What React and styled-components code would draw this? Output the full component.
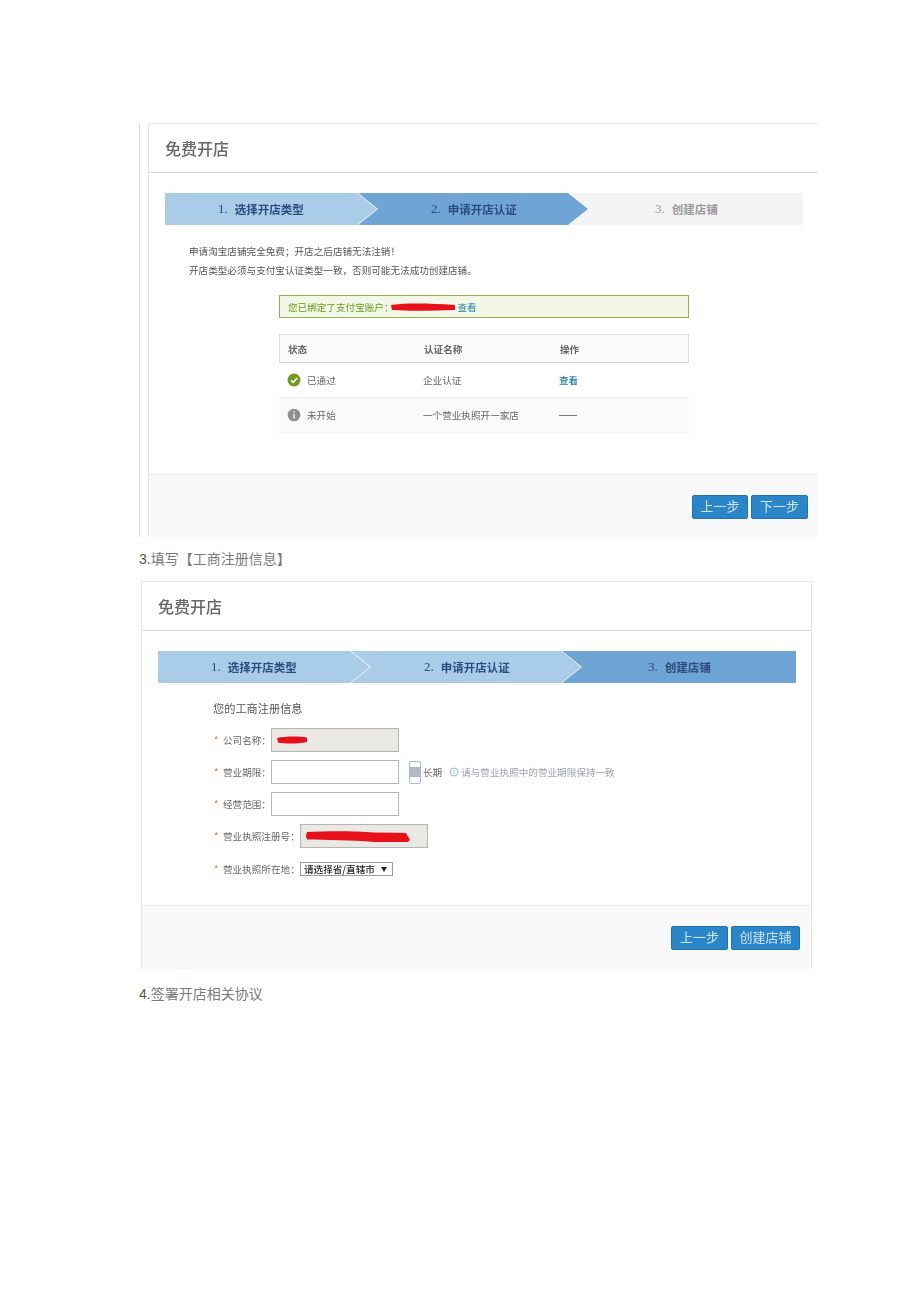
import React from "react";
import styled, { createGlobalStyle } from "styled-components";

const Global = createGlobalStyle`
  html, body { margin: 0; padding: 0; background: #fff; }
  body { font-family: "Noto Sans CJK SC", "Liberation Sans", sans-serif; }
`;

const Page = styled.div`
  box-sizing: border-box;
  width: 920px;
  height: 1302px;
  padding: 123px 0 0 139px;
  overflow: hidden;
`;

const Shot = styled.div`
  box-sizing: border-box;
  display: flex;
  width: ${(p) => p.$width}px;
  height: ${(p) => p.$height}px;
  margin: ${(p) => p.$top || 0}px 0 0 ${(p) => p.$left || 0}px;
  padding-left: ${(p) => (p.$rail ? 8 : 0)}px;
  border-left: ${(p) => (p.$rail ? "1px solid #dcdcdc" : "0")};
  filter: blur(0.45px);
`;

const Panel = styled.section`
  flex: 1;
  min-width: 0;
  display: flex;
  flex-direction: column;
  border: 1px solid #e6e6e6;
  border-bottom: 0;
  border-right: ${(p) => (p.$closed ? "1px solid #e6e6e6" : "0")};
`;

const TitleBar = styled.header`
  box-sizing: border-box;
  height: 49px;
  flex: none;
  display: flex;
  align-items: center;
  padding: 0 0 1px 16px;
  border-bottom: 1px solid #dcdcdc;
  font-size: 16px;
  font-weight: 500;
  color: #666;
`;

const Body = styled.div`
  flex: 1;
  min-height: 0;
  padding: 20px 15px 0 16px;
`;

const StepBar = styled.div`
  display: flex;
  height: 32px;
  width: 638px;
  background: #f3f3f3;
`;

const arrow = "polygon(0 0, calc(100% - 20px) 0, 100% 50%, calc(100% - 20px) 100%, 0 100%)";

const Step = styled.div`
  position: relative;
  box-sizing: border-box;
  flex: none;
  width: ${(p) => p.$width}px;
  margin-left: ${(p) => (p.$first ? 0 : -20)}px;
  z-index: ${(p) => p.$z};
  display: flex;
  align-items: center;
  padding-left: ${(p) => p.$pad}px;
  font-size: 11.5px;
  font-weight: 700;
  color: ${(p) => (p.$muted ? "#9a9a9a" : "#2b4c7e")};
  background: ${(p) => (p.$tail ? "transparent" : "#fff")};
  clip-path: ${(p) => (p.$tail ? "none" : arrow)};
  &::before {
    content: "";
    position: absolute;
    inset: 0 ${(p) => (p.$tail ? 0 : "1px")} 0 0;
    z-index: -1;
    background: ${(p) => p.$color};
    clip-path: ${(p) => (p.$tail ? "none" : arrow)};
  }
`;

const Num = styled.span`
  font-family: "Liberation Serif", serif;
  font-size: 13px;
  font-weight: 400;
  white-space: pre;
  margin-right: 7px;
`;

const Intro = styled.div`
  margin: 17px 0 0 24px;
  font-size: 9.6px;
  line-height: 19px;
  color: #555;
`;

const Center = styled.div`
  width: 410px;
  margin: 15px 0 0 114px;
`;

const Alert = styled.div`
  box-sizing: border-box;
  height: 23px;
  display: flex;
  align-items: center;
  gap: 3px;
  padding-left: 8px;
  background: #f2f7e6;
  border: 1px solid #8fae55;
  font-size: 9.6px;
  color: #6c9a22;
`;

const Link = styled.span`
  color: #1d7f9f;
  font-weight: ${(p) => (p.$bold ? 500 : 400)};
`;

const Redact = styled.svg`
  display: block;
  flex: none;
  margin-left: ${(p) => p.$pull || 0}px;
`;

const Table = styled.div`
  margin-top: 16px;
  font-size: 9.6px;
  color: #666;
`;

const Row = styled.div`
  box-sizing: border-box;
  display: grid;
  grid-template-columns: 136px 136px 1fr;
  align-items: center;
  padding-left: 8px;
  height: ${(p) => p.$height}px;
  background: ${(p) => p.$bg || "#fff"};
  border: ${(p) => (p.$head ? "1px solid #dcdcdc" : "0")};
  border-bottom: 1px solid ${(p) => (p.$head ? "#d4d4d4" : "#f0f0f0")};
  font-weight: ${(p) => (p.$head ? 700 : 400)};
`;

const Status = styled.div`
  display: flex;
  align-items: center;
  gap: 6px;
`;

const Dash = styled.span`
  display: block;
  width: 18px;
  height: 1px;
  background: #777;
`;

const Footer = styled.footer`
  box-sizing: border-box;
  flex: none;
  height: ${(p) => p.$height}px;
  display: flex;
  justify-content: flex-end;
  gap: 3px;
  padding: 20px ${(p) => p.$right}px 0 0;
  background: #f9f9f9;
  border-top: 1px solid #e9e9e9;
`;

const Button = styled.div`
  box-sizing: border-box;
  width: ${(p) => p.$width}px;
  height: 24px;
  display: flex;
  align-items: center;
  justify-content: center;
  padding-bottom: 3px;
  background: #2a86c8;
  border: 1px solid #1f73ae;
  border-radius: 2px;
  color: #cfe4f3;
  font-size: 13px;
`;

const Caption = styled.p`
  margin: ${(p) => p.$top}px 0 0;
  font-size: 14px;
  line-height: 22px;
  color: #7a7a7a;
`;

const CaptionNum = styled.span`
  font-family: "Liberation Sans", sans-serif;
  color: #555;
`;

const Form = styled.div`
  margin: 15px 0 0 55px;
  font-size: 9.6px;
  color: #666;
`;

const FormTitle = styled.div`
  font-size: 11.2px;
  line-height: 20px;
  color: #555;
  margin-bottom: 10px;
`;

const FormRow = styled.div`
  display: flex;
  align-items: center;
  height: 24px;
  margin-top: ${(p) => p.$top ?? 8}px;
`;

const Label = styled.div`
  flex: none;
  width: ${(p) => p.$width}px;
  white-space: nowrap;
`;

const Star = styled.span`
  display: inline-block;
  width: 10px;
  padding-left: 1px;
  box-sizing: border-box;
  color: #e66;
`;

const Input = styled.div`
  box-sizing: border-box;
  flex: none;
  width: ${(p) => p.$width || 128}px;
  height: 24px;
  display: flex;
  align-items: center;
  padding-left: 5px;
  border: 1px solid #b5b5b5;
  background: ${(p) => (p.$disabled ? "#ebe9e3" : "#fff")};
`;

const Check = styled.div`
  box-sizing: border-box;
  flex: none;
  width: 12px;
  height: 23px;
  margin: 0 2px 0 10px;
  display: flex;
  align-items: center;
  justify-content: center;
  border: 1px solid #9db8e2;
  border-radius: 2px;
  &::after {
    content: "";
    width: 10px;
    height: 10px;
    background: #b4b8bd;
  }
`;

const Hint = styled.span`
  display: flex;
  align-items: center;
  gap: 2px;
  margin-left: 7px;
  font-size: 9.6px;
  color: #9aa3ad;
`;

const Select = styled.div`
  box-sizing: border-box;
  flex: none;
  width: 93px;
  height: 14px;
  display: flex;
  align-items: center;
  justify-content: space-between;
  padding: 0 5px 0 3px;
  border: 1px solid #9a9a9a;
  background: #fff;
  color: #222;
  font-size: 9.6px;
  font-weight: 500;
`;

const Arrow = styled.span`
  width: 0;
  height: 0;
  border-left: 3px solid transparent;
  border-right: 3px solid transparent;
  border-top: 5px solid #222;
`;

const Steps = ({ items }) => (
  <StepBar>
    {items.map((s, i) => (
      <Step
        key={s.n}
        $first={i === 0}
        $z={3 - i}
        $tail={i === 2}
        $width={[213, 231, 234][i]}
        $pad={[53, 73, 86][i]}
        $color={s.color}
        $muted={s.muted}
      >
        <Num>{s.n}.</Num>
        {s.t}
      </Step>
    ))}
  </StepBar>
);

const LIGHT = "#a9cce9";
const DARK = "#6fa5d5";
const COLON = "\uFF1A";

const CheckIcon = () => (
  <svg width="14" height="14" viewBox="0 0 14 14">
    <circle cx="7" cy="7" r="6.5" fill="#6f9a1e" />
    <path d="M4 7.2l2.2 2.2L10.2 5" fill="none" stroke="#fff" strokeWidth="1.6" />
  </svg>
);

const InfoIcon = () => (
  <svg width="14" height="14" viewBox="0 0 14 14">
    <circle cx="7" cy="7" r="6.3" fill="#8e8e8e" />
    <path d="M7 6v4.4M7 3.4v1.4" stroke="#e8e8e8" strokeWidth="1.6" />
  </svg>
);

const HintIcon = () => (
  <svg width="10" height="10" viewBox="0 0 10 10">
    <circle cx="5" cy="5" r="4" fill="none" stroke="#8fb2d8" strokeWidth="0.9" />
    <path d="M5 4.4v3M5 2.6v1" stroke="#8fb2d8" strokeWidth="0.9" />
  </svg>
);

export default function App() {
  return (
    <Page>
      <Global />
      <Shot $width={679} $height={414} $rail>
        <Panel>
          <TitleBar>免费开店</TitleBar>
          <Body>
            <Steps
              items={[
                { n: 1, t: "选择开店类型", color: LIGHT },
                { n: 2, t: "申请开店认证", color: DARK },
                { n: 3, t: "创建店铺", color: "#f3f3f3", muted: true },
              ]}
            />
            <Intro>
              {"申请淘宝店铺完全免费\uFF1B开店之后店铺无法注销\uFF01"}
              <br />
              {"开店类型必须与支付宝认证类型一致\uFF0C否则可能无法成功创建店铺。"}
            </Intro>
            <Center>
              <Alert>
                {"您已绑定了支付宝账户" + COLON}
                <Redact $pull={-6} width="64" height="8" viewBox="0 0 64 8">
                  <path d="M0 2C12 0 36 0 64 2V7C40 8 14 8 1 7Z" fill="#e8101a" />
                </Redact>
                <Link>查看</Link>
              </Alert>
              <Table>
                <Row $head $height={29} $bg="#fafafa">
                  <span>状态</span>
                  <span>认证名称</span>
                  <span>操作</span>
                </Row>
                <Row $height={35}>
                  <Status>
                    <CheckIcon />
                    已通过
                  </Status>
                  <span>企业认证</span>
                  <Link $bold>查看</Link>
                </Row>
                <Row $height={35} $bg="#fafafa">
                  <Status>
                    <InfoIcon />
                    未开始
                  </Status>
                  <span>一个营业执照开一家店</span>
                  <Dash />
                </Row>
              </Table>
            </Center>
          </Body>
          <Footer $height={63} $right={10}>
            <Button $width={56}>上一步</Button>
            <Button $width={57}>下一步</Button>
          </Footer>
        </Panel>
      </Shot>
      <Caption $top={10}>
        <CaptionNum>3.</CaptionNum>填写【工商注册信息】
      </Caption>
      <Shot $width={671} $height={388} $left={2} $top={11}>
        <Panel $closed>
          <TitleBar>免费开店</TitleBar>
          <Body>
            <Steps
              items={[
                { n: 1, t: "选择开店类型", color: LIGHT },
                { n: 2, t: "申请开店认证", color: LIGHT },
                { n: 3, t: "创建店铺", color: DARK },
              ]}
            />
            <Form>
              <FormTitle>您的工商注册信息</FormTitle>
              <FormRow $top={0}>
                <Label $width={58}>
                  <Star>*</Star>
                  {"公司名称" + COLON}
                </Label>
                <Input $disabled>
                  <Redact width="30" height="8" viewBox="0 0 30 8">
                    <path d="M0 2C8 0 22 0 30 1.5V6C20 8 8 8 1 6.5Z" fill="#e8101a" />
                  </Redact>
                </Input>
              </FormRow>
              <FormRow>
                <Label $width={58}>
                  <Star>*</Star>
                  {"营业期限" + COLON}
                </Label>
                <Input />
                <Check />
                长期
                <Hint>
                  <HintIcon />
                  请与营业执照中的营业期限保持一致
                </Hint>
              </FormRow>
              <FormRow>
                <Label $width={58}>
                  <Star>*</Star>
                  {"经营范围" + COLON}
                </Label>
                <Input />
              </FormRow>
              <FormRow>
                <Label $width={87}>
                  <Star>*</Star>
                  {"营业执照注册号" + COLON}
                </Label>
                <Input $disabled>
                  <Redact width="104" height="11" viewBox="0 0 104 11">
                    <path d="M1 1C22 0 50 0 68 1.5L100 2L104 9L102 11H68C45 9 20 9 1 8.5L0 5Z" fill="#e8101a" />
                  </Redact>
                </Input>
              </FormRow>
              <FormRow $top={9}>
                <Label $width={87}>
                  <Star>*</Star>
                  {"营业执照所在地" + COLON}
                </Label>
                <Select>
                  请选择省/直辖市
                  <Arrow />
                </Select>
              </FormRow>
            </Form>
          </Body>
          <Footer $height={64} $right={11}>
            <Button $width={57}>上一步</Button>
            <Button $width={69}>创建店铺</Button>
          </Footer>
        </Panel>
      </Shot>
      <Caption $top={13}>
        <CaptionNum>4.</CaptionNum>签署开店相关协议
      </Caption>
    </Page>
  );
}
